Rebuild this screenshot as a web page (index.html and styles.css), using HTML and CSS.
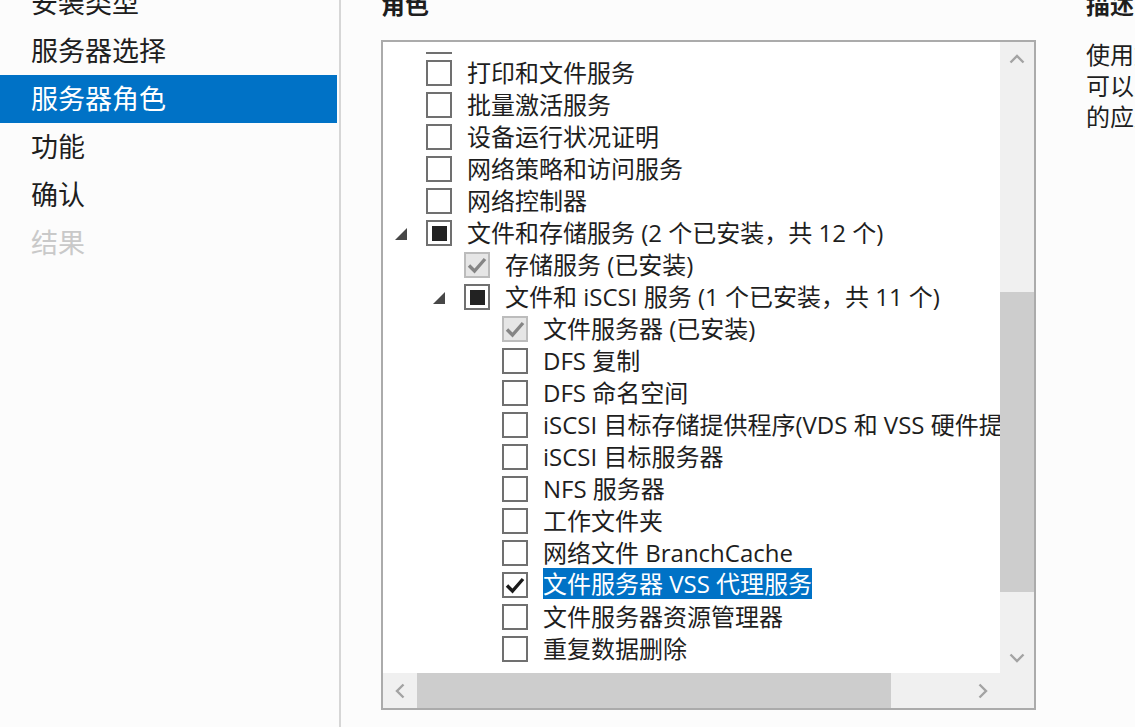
FILE: index.html
```html
<!DOCTYPE html>
<html lang="zh-CN">
<head>
<meta charset="utf-8">
<title>服务器角色</title>
<link rel="stylesheet" href="styles.css">
</head>
<body>
<div class="page">
  <nav class="nav">
    <div class="nav-list">
      <div class="nav-item">安装类型</div>
      <div class="nav-item">服务器选择</div>
      <div class="nav-item active">服务器角色</div>
      <div class="nav-item">功能</div>
      <div class="nav-item">确认</div>
      <div class="nav-item disabled">结果</div>
    </div>
  </nav>
  <main class="main">
    <section class="roles">
      <h2 class="heading">角色</h2>
      <div class="listbox">
        <div class="viewport">
          <div class="clip">
            <div class="rows">
              <div class="row"><span class="exp"></span><span class="cb"></span></div>
              <div class="row"><span class="exp"></span><span class="cb"></span><span class="label">打印和文件服务</span></div>
              <div class="row"><span class="exp"></span><span class="cb"></span><span class="label">批量激活服务</span></div>
              <div class="row"><span class="exp"></span><span class="cb"></span><span class="label">设备运行状况证明</span></div>
              <div class="row"><span class="exp"></span><span class="cb"></span><span class="label">网络策略和访问服务</span></div>
              <div class="row"><span class="exp"></span><span class="cb"></span><span class="label">网络控制器</span></div>
              <div class="row"><span class="exp"><svg class="tri" width="12" height="12" viewBox="0 0 12 12"><polygon points="12,0 12,12 0,12"/></svg></span><span class="cb partial"><span class="dot"></span></span><span class="label">文件和存储服务 (2 个已安装，共 12 个)</span></div>
              <div class="row lv1"><span class="exp"></span><span class="cb disabled"><svg class="chk" width="22" height="22" viewBox="0 0 22 22"><path d="M3 11.5 L8.5 17 L19 5"/></svg></span><span class="label">存储服务 (已安装)</span></div>
              <div class="row lv1"><span class="exp"><svg class="tri" width="12" height="12" viewBox="0 0 12 12"><polygon points="12,0 12,12 0,12"/></svg></span><span class="cb partial"><span class="dot"></span></span><span class="label">文件和 iSCSI 服务 (1 个已安装，共 11 个)</span></div>
              <div class="row lv2"><span class="exp"></span><span class="cb disabled"><svg class="chk" width="22" height="22" viewBox="0 0 22 22"><path d="M3 11.5 L8.5 17 L19 5"/></svg></span><span class="label">文件服务器 (已安装)</span></div>
              <div class="row lv2"><span class="exp"></span><span class="cb"></span><span class="label">DFS 复制</span></div>
              <div class="row lv2"><span class="exp"></span><span class="cb"></span><span class="label">DFS 命名空间</span></div>
              <div class="row lv2"><span class="exp"></span><span class="cb"></span><span class="label">iSCSI 目标存储提供程序(VDS 和 VSS 硬件提供程序)</span></div>
              <div class="row lv2"><span class="exp"></span><span class="cb"></span><span class="label">iSCSI 目标服务器</span></div>
              <div class="row lv2"><span class="exp"></span><span class="cb"></span><span class="label">NFS 服务器</span></div>
              <div class="row lv2"><span class="exp"></span><span class="cb"></span><span class="label">工作文件夹</span></div>
              <div class="row lv2"><span class="exp"></span><span class="cb"></span><span class="label">网络文件 BranchCache</span></div>
              <div class="row lv2"><span class="exp"></span><span class="cb"><svg class="chk on" width="22" height="22" viewBox="0 0 22 22"><path d="M3 11.5 L8.5 17 L19 5"/></svg></span><span class="label selected">文件服务器 VSS 代理服务</span></div>
              <div class="row lv2"><span class="exp"></span><span class="cb"></span><span class="label">文件服务器资源管理器</span></div>
              <div class="row lv2"><span class="exp"></span><span class="cb"></span><span class="label">重复数据删除</span></div>
            </div>
          </div>
        </div>
        <div class="vscroll">
          <div class="sbtn"><svg class="chev" width="16" height="10" viewBox="0 0 16 10"><polyline points="1.5,8.5 8,2 14.5,8.5"/></svg></div>
          <div class="vtrack"><div class="vthumb"></div></div>
          <div class="sbtn down"><svg class="chev" width="16" height="10" viewBox="0 0 16 10"><polyline points="1.5,1.5 8,8 14.5,1.5"/></svg></div>
        </div>
        <div class="hscroll">
          <div class="sbtn"><svg class="chev" width="10" height="16" viewBox="0 0 10 16"><polyline points="8.5,1.5 2,8 8.5,14.5"/></svg></div>
          <div class="htrack"><div class="hthumb"></div></div>
          <div class="sbtn"><svg class="chev" width="10" height="16" viewBox="0 0 10 16"><polyline points="1.5,1.5 8,8 1.5,14.5"/></svg></div>
        </div>
        <div class="corner"></div>
      </div>
    </section>
    <section class="desc">
      <h2 class="heading">描述</h2>
      <p class="desc-text">使用文件服务器 VSS 代理服务，<br>可以对在此文件服务器上存储数据文件<br>的应用程序执行卷影复制。</p>
    </section>
  </main>
</div>
</body>
</html>
```

FILE: styles.css
```css
html, body {
  margin: 0;
  height: 100%;
  overflow: hidden;
  background: #fcfcfc;
}

body {
  font-family: "Open Sans", "Noto Sans CJK SC", sans-serif;
  color: #1e1e1e;
}

.page {
  display: flex;
  height: 727px;
}

/* left navigation */
.nav {
  width: 337px;
  padding-right: 2px;
  border-right: 2px solid #d6d6d6;
  flex-shrink: 0;
  overflow: hidden;
}

.nav-list {
  margin-top: -21px;
}

.nav-item {
  height: 48px;
  line-height: 48px;
  padding-left: 31px;
  font-size: 27px;
  white-space: nowrap;
}

.nav-item.active {
  background: #0072c6;
  color: #fff;
}

.nav-item.disabled {
  color: #c9c9c9;
}

/* main area */
.main {
  display: flex;
  padding-left: 40px;
  flex: 1;
  min-width: 0;
}

.roles {
  width: 655px;
  flex-shrink: 0;
}

.heading {
  margin: -11px 0 0;
  height: 32px;
  font-size: 24px;
  line-height: 32px;
  font-weight: 700;
  white-space: nowrap;
}

.listbox {
  margin-top: 19px;
  width: 655px;
  height: 670px;
  box-sizing: border-box;
  border: 2px solid #ababab;
  background: #fff;
  display: grid;
  grid-template-columns: 1fr 34px;
  grid-template-rows: 1fr 35px;
}

.viewport {
  grid-column: 1;
  grid-row: 1;
  padding: 10px 0;
  min-width: 0;
  min-height: 0;
  overflow: hidden;
}

.clip {
  height: 100%;
  overflow: hidden;
}

.rows {
  margin-top: -27px;
}

.row {
  display: flex;
  align-items: center;
  height: 32px;
  font-size: 24px;
  line-height: 32px;
  white-space: nowrap;
}

.row.lv1 { padding-left: 38px; }
.row.lv2 { padding-left: 76px; }

.exp {
  width: 43px;
  height: 32px;
  flex-shrink: 0;
  display: flex;
  align-items: center;
}

.tri {
  margin-left: 12px;
  margin-top: 2px;
  fill: #474747;
}

.cb {
  width: 26px;
  height: 26px;
  box-sizing: border-box;
  border: 2px solid #707070;
  background: #fff;
  flex-shrink: 0;
  margin-right: 15px;
  display: flex;
  align-items: center;
  justify-content: center;
}

.cb.partial .dot {
  width: 15px;
  height: 15px;
  background: #222;
}

.cb.disabled {
  background: #e6e6e6;
  border-color: #bcbcbc;
}

.chk {
  fill: none;
  stroke: #858585;
  stroke-width: 3.4;
}

.chk.on {
  stroke: #1a1a1a;
}

.label.selected {
  display: inline-block;
  height: 31px;
  line-height: 31px;
  align-self: flex-start;
  margin-top: -1px;
  background: #0072c6;
  color: #fff;
}

/* scrollbars */
.vscroll {
  grid-column: 2;
  grid-row: 1;
  background: #f0f0f0;
  display: flex;
  flex-direction: column;
}

.sbtn {
  width: 34px;
  height: 34px;
  flex-shrink: 0;
  display: flex;
  align-items: center;
  justify-content: center;
}

.sbtn.down {
  padding-top: 3px;
  box-sizing: border-box;
}

.chev {
  fill: none;
  stroke: #a3a3a3;
  stroke-width: 2.4;
}

.vtrack {
  flex: 1;
}

.vthumb {
  margin-top: 216px;
  height: 300px;
  background: #cdcdcd;
}

.hscroll {
  grid-column: 1;
  grid-row: 2;
  background: #f0f0f0;
  display: flex;
  min-width: 0;
}

.hscroll .sbtn {
  height: 35px;
}

.htrack {
  flex: 1;
}

.hthumb {
  width: 474px;
  height: 35px;
  background: #cdcdcd;
}

.corner {
  grid-column: 2;
  grid-row: 2;
  background: #f0f0f0;
}

/* description */
.desc {
  margin-left: 50px;
  width: 420px;
  flex-shrink: 0;
}

.desc-text {
  margin: 18px 0 0;
  font-size: 24px;
  line-height: 31px;
  white-space: nowrap;
}
```
